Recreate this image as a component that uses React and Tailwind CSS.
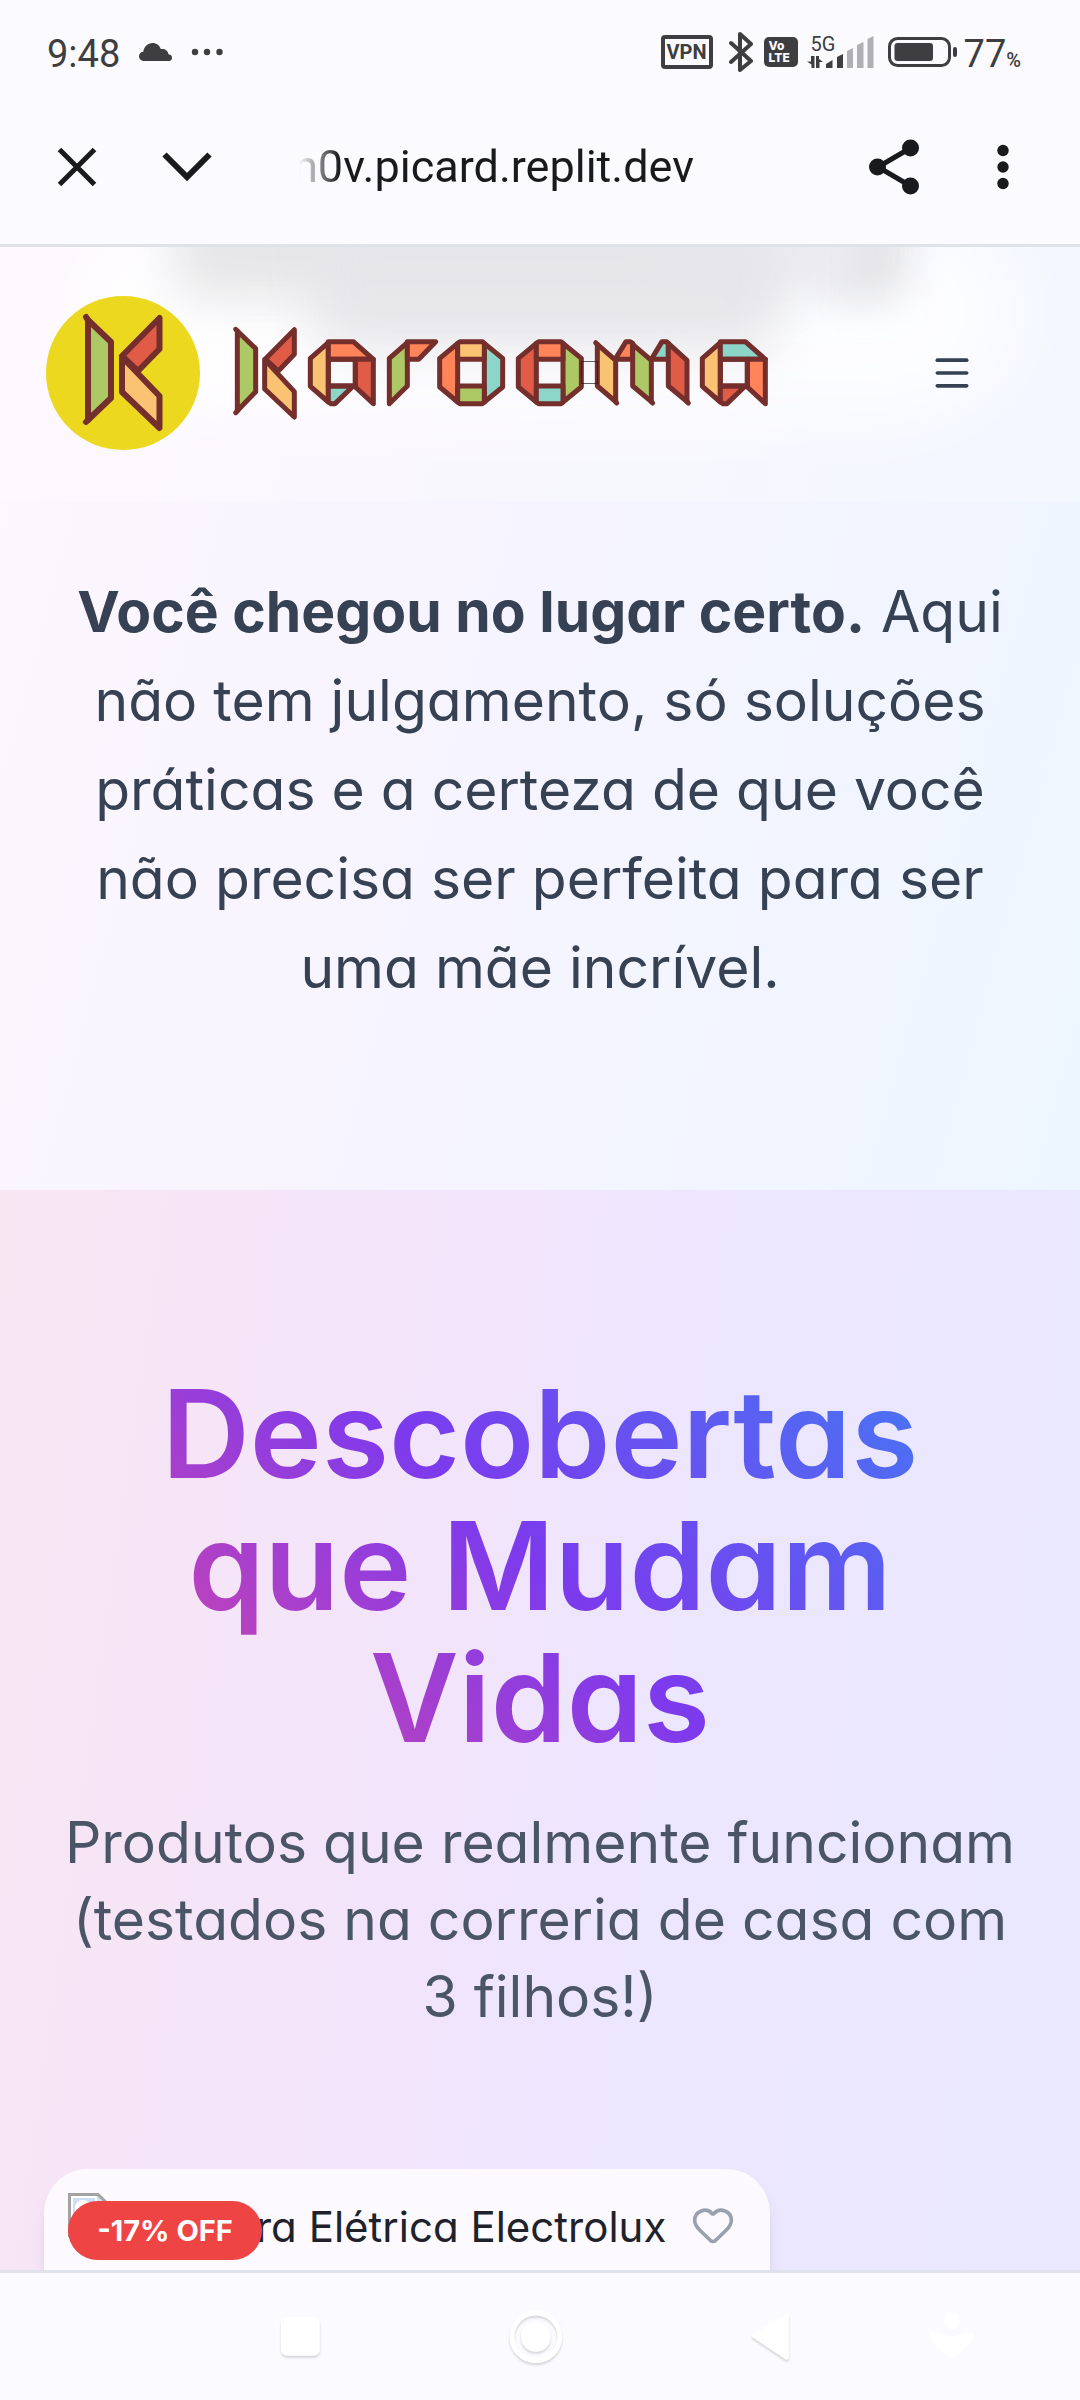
import { Heart, Menu } from "lucide-react";

const C = {
  line: "#742f2c",
  green: "#adc965",
  red: "#e05c46",
  sand: "#fac273",
  coral: "#ff8459",
  teal: "#8bd6c9",
};

function Panels({ items, dx = 0 }) {
  return (
    <g transform={`translate(${dx} 0)`}>
      {items.map(([fill, points]) => (
        <polygon key={points} fill={fill} points={points} />
      ))}
    </g>
  );
}

function LetterA({ dx, left, top, right, bottom }) {
  return (
    <Panels
      dx={dx}
      items={[
        [left, "271,142 325,95 325,273 271,226"],
        [top, "325,92 400,92 460,145 325,145"],
        [right, "406,145 460,145 460,278 406,228"],
        [bottom, "325,225 400,225 345,278 333,278 325,272"],
        ["none", "325,145 406,145 406,225 325,225"],
      ]}
    />
  );
}

function LetterO({ dx, left, top, right, bottom }) {
  return (
    <Panels
      dx={dx}
      items={[
        [left, "659,142 713,97 713,273 659,228"],
        [right, "793,97 848,142 848,228 793,273"],
        [top, "713,97 720,92 787,92 793,97 793,145 713,145"],
        [bottom, "713,225 793,225 793,273 787,278 720,278 713,273"],
      ]}
    />
  );
}

function Wordmark() {
  return (
    <svg viewBox="36 42 1614 288" className="h-24 w-[538px]" role="img" aria-label="Karooma">
      <g stroke={C.line} strokeWidth="15" strokeLinejoin="round" strokeLinecap="round">
        <Panels
          items={[
            [C.green, "52,60 107,113 107,242 52,299"],
            [C.red, "223,56 223,130 175,180 136,144"],
            [C.sand, "134,146 134,234 223,318 223,242"],
          ]}
        />
        <path d="M47 55 L54 62 M47 305 L54 298" />
        <LetterA dx={0} left={C.sand} top={C.coral} right={C.red} bottom={C.teal} />
        <Panels
          items={[
            [C.green, "508,142 562,95 562,225 508,278"],
            [C.coral, "562,92 647,92 596,145 562,145"],
          ]}
        />
        <LetterO dx={0} left={C.coral} top={C.sand} right={C.teal} bottom={C.green} />
        <LetterO dx={236} left={C.red} top={C.coral} right={C.green} bottom={C.teal} />
        <Panels
          dx={810}
          items={[
            [C.coral, "377,142 408,92 421,92 428,97 428,145 377,145"],
            [C.teal, "484,145 516,92 530,92 535,97 535,145"],
            [C.sand, "322,100 377,148 377,272 322,225"],
            [C.green, "428,100 484,148 484,272 428,225"],
            [C.red, "535,97 591,148 591,272 535,225"],
          ]}
        />
        <path d="M1127 95 L1133 101 M1187 272 L1190 276 M1294 272 L1298 276 M1401 272 L1405 276" />
        <LetterA dx={1176} left={C.sand} top={C.teal} right={C.coral} bottom={C.red} />
      </g>
      <rect x="1084" y="152" width="49" height="65" fill="none" stroke="#1d1414" strokeWidth="2" />
    </svg>
  );
}

function LogoBadge() {
  return (
    <svg viewBox="46 296 154 154" className="size-[154px]" aria-hidden="true">
      <circle cx="123" cy="373" r="77" fill="#edd820" />
      <g stroke={C.line} strokeWidth="6" strokeLinejoin="round" strokeLinecap="round">
        <polygon fill={C.green} points="88,320 111,342 111,398 88,420" />
        <path d="M86 317 L88 320 M86 422 L88 420" />
        <polygon fill={C.red} points="159.5,318 159.5,349 138,371 122,356" />
        <polygon fill={C.sand} points="122,357 122,392 159.5,428 159.5,396" />
      </g>
    </svg>
  );
}

function StatusBar() {
  return (
    <div className="flex h-[104px] items-center justify-between pl-[47px] pr-[59px] font-['Roboto',sans-serif] text-[#3e3e40]">
      <div className="flex items-center">
        <span className="pt-1 text-[38px] leading-10">9:48</span>
        <svg viewBox="0 0 33 18" className="ml-[19px] h-[18px] w-[33px]" fill="currentColor" aria-hidden="true">
          <path d="M5 18 A4.7 4.7 0 0 1 0 13.400 C0 10.500 2 8.800 4.300 8.700 C5 3.500 8.700 0 13.500 0 C17.500 0 20.500 2.300 21.800 6 C26 5.500 29 7.500 29.500 11.300 C32 11.800 33 13 33 15 C33 17 31.800 18 30 18 Z" />
        </svg>
        <svg viewBox="0 0 32 8" className="ml-[19px] h-2 w-8" fill="currentColor" aria-hidden="true">
          <circle cx="4" cy="4" r="3.200" />
          <circle cx="16" cy="4" r="3.200" />
          <circle cx="28.500" cy="4" r="3.200" />
        </svg>
      </div>
      <div className="flex items-center">
        <span className="flex h-[34px] w-[52px] items-center justify-center rounded-[4px] border-4 border-current text-[20px] font-bold leading-5">VPN</span>
        <svg viewBox="0 0 24 40" className="ml-4 h-10 w-6" fill="none" stroke="currentColor" strokeWidth="4" strokeLinecap="round" strokeLinejoin="round" aria-hidden="true">
          <path d="M2 11 L22 29 L11 38 V2 L22 12 L2 30" />
        </svg>
        <span className="ml-[11px] flex h-[30px] w-[34px] flex-col justify-center rounded-[5px] bg-[#3e3e40] pl-[5px] font-['Inter',sans-serif] text-[12px] font-extrabold leading-3 text-[#fafaff]">
          <span>Vo</span>
          <span>LTE</span>
        </span>
        <div className="ml-[9px] flex h-8 w-[68px] items-end">
          <div className="flex h-8 w-[18px] flex-col justify-between">
            <span className="ml-1 text-[20px] leading-4">5G</span>
            <svg viewBox="0 0 18 12" className="h-3 w-[18px]" fill="currentColor" aria-hidden="true">
              <path d="M4 0 H7.500 V12 H4.500 V8.500 L0 5.500 H4 Z M9 0 H12 V3 L16 6 H12.500 V12 H9 Z" />
            </svg>
          </div>
          <svg viewBox="0 0 50 32" className="h-8 w-[50px]" aria-hidden="true">
            <path fill="#3e3e40" d="M1 28 L7.500 24 V32 H1 Z M12 21 L18 18 V32 H12 Z" />
            <path fill="#b0afb4" d="M22 15 L28 12 V32 H22 Z M32 9 L38.500 6 V32 H32 Z M42.500 3 L48.500 0 V32 H42.500 Z" />
          </svg>
        </div>
        <svg viewBox="0 0 70 32" className="ml-[13px] h-8 w-[70px]" aria-hidden="true">
          <rect x="1.500" y="2.500" width="60" height="27" rx="8" fill="none" stroke="#3e3e40" strokeWidth="3" />
          <rect x="6.500" y="7" width="38.500" height="18" rx="3" fill="#3e3e40" />
          <rect x="65" y="11" width="4" height="10" rx="2" fill="#3e3e40" />
        </svg>
        <span className="ml-[6px] flex items-baseline pt-1 text-[38px] leading-10">
          77<span className="text-[20px] font-medium leading-5">%</span>
        </span>
      </div>
    </div>
  );
}

function BrowserBar() {
  return (
    <div className="flex h-[126px] items-center px-[52px] text-[#191a1e]">
      <button type="button" aria-label="Fechar" className="size-[50px]">
        <svg viewBox="0 0 50 50" fill="none" stroke="currentColor" strokeWidth="5" aria-hidden="true">
          <path d="M7.500 7.500 L42.500 42.500 M42.500 7.500 L7.500 42.500" />
        </svg>
      </button>
      <button type="button" aria-label="Minimizar" className="ml-[59px] size-[52px]">
        <svg viewBox="0 0 52 52" fill="none" stroke="currentColor" strokeWidth="6" aria-hidden="true">
          <path d="M3.500 13.500 L26 36 L48.500 13.500" />
        </svg>
      </button>
      <div className="ml-[80px] flex min-w-0 flex-1 overflow-hidden [mask-image:linear-gradient(to_right,transparent_6px,black_46px)]">
        <span className="whitespace-nowrap font-['Roboto',sans-serif] text-[45px] leading-[56px]">n0v.picard.replit.dev</span>
      </div>
      <button type="button" aria-label="Compartilhar" className="h-14 w-[52px]">
        <svg viewBox="0 0 52 56" fill="currentColor" aria-hidden="true">
          <path d="M42.500 9 L10 28 L42.500 47" fill="none" stroke="currentColor" strokeWidth="5" />
          <circle cx="42.500" cy="9" r="8.500" />
          <circle cx="9.500" cy="28" r="8.500" />
          <circle cx="42.500" cy="47" r="8.500" />
        </svg>
      </button>
      <button type="button" aria-label="Mais opções" className="ml-[58px] h-14 w-[50px]">
        <svg viewBox="0 0 50 56" fill="currentColor" aria-hidden="true">
          <circle cx="25" cy="11.500" r="5.700" />
          <circle cx="25" cy="28" r="5.700" />
          <circle cx="25" cy="44.500" r="5.700" />
        </svg>
      </button>
    </div>
  );
}

function SiteHeader() {
  return (
    <header className="relative isolate flex h-[254px] items-center justify-between overflow-hidden bg-white/25 pb-0.5 pl-[46px] pr-[106px]">
      <div className="absolute inset-x-[70px] -top-10 -z-10 h-[210px] rounded-full bg-white/80 blur-[40px]" />
      <div className="absolute -top-16 left-[16%] right-[28%] -z-10 h-[116px] rounded-3xl bg-[#e3e3e6]/90 blur-[24px]" />
      <div className="absolute -top-16 left-[76%] right-[16%] -z-10 h-[116px] rounded-3xl bg-[#e2e2e5] blur-[22px]" />
      <div className="absolute -top-10 left-[60%] right-[20%] -z-10 h-[80px] rounded-3xl bg-[#ebebef] blur-[22px]" />
      <div className="absolute -top-10 left-[29%] right-[28%] -z-10 h-[146px] rounded-3xl bg-[#e5e5e9]/90 blur-[26px]" />
      <a href="#inicio" aria-label="Karooma" className="flex items-center gap-8">
        <LogoBadge />
        <Wordmark />
      </a>
      <button type="button" aria-label="Abrir menu" className="text-gray-700">
        <Menu size={44} strokeWidth={2} />
      </button>
    </header>
  );
}

function ProductCard() {
  return (
    <article className="relative flex h-[160px] w-[726px] items-start rounded-[44px] bg-[#fcfaff] pl-6 pr-9 pt-6 shadow-lg">
      <svg viewBox="0 0 40 44" className="h-11 w-10" aria-hidden="true">
        <path d="M1.500 44 V1.500 H30 L39 10 V44" fill="#cfdef7" stroke="#a3a3a3" strokeWidth="3" />
        <path d="M4 44 V4 H28 V14 H40" fill="none" stroke="#fff" strokeWidth="2" />
        <circle cx="15" cy="15" r="8" fill="#fff" />
      </svg>
      <span className="ml-[148px] mt-[6px] whitespace-nowrap font-['Inter',sans-serif] text-[42px] leading-[56px] text-[#20222b] [font-feature-settings:'cv11']">ra Elétrica Electrolux</span>
      <button type="button" aria-label="Adicionar aos favoritos" className="absolute right-[35px] top-[34px] text-gray-400">
        <Heart size={44} strokeWidth={2} />
      </button>
      <span className="absolute left-6 top-8 flex h-[59px] w-[194px] items-center justify-center rounded-full bg-[#ef4444] font-['Inter',sans-serif] text-[29px] font-bold leading-8 text-white">-17% OFF</span>
    </article>
  );
}

function NavBar() {
  return (
    <nav aria-label="Navegação do sistema" className="flex h-[130px] shrink-0 items-center border-t-[3px] border-[#e1e3ec] bg-[#fafaff] pl-[272px] pr-[100px]">
      <button type="button" aria-label="Recentes" className="size-14">
        <svg viewBox="0 0 56 56" className="drop-shadow-[0_2px_1px_rgba(0,0,0,0.15)]" aria-hidden="true">
          <rect x="9" y="8" width="39" height="39" rx="6" fill="#fff" />
        </svg>
      </button>
      <button type="button" aria-label="Início" className="ml-[180px] size-14">
        <svg viewBox="0 0 56 56" className="drop-shadow-[0_2px_1px_rgba(0,0,0,0.15)]" aria-hidden="true">
          <circle cx="28" cy="28" r="24" fill="none" stroke="#fff" strokeWidth="5" />
          <circle cx="28" cy="28" r="15" fill="#fff" />
        </svg>
      </button>
      <button type="button" aria-label="Voltar" className="ml-[179px] size-14">
        <svg viewBox="0 0 56 56" className="drop-shadow-[0_2px_1px_rgba(0,0,0,0.15)]" aria-hidden="true">
          <path d="M11 27 L44 7 V49 Z" fill="#fff" stroke="#fff" strokeWidth="4" strokeLinejoin="round" />
        </svg>
      </button>
      <button type="button" aria-label="Ocultar barra" className="ml-[126px] size-14">
        <svg viewBox="0 0 56 56" fill="#fff" aria-hidden="true">
          <circle cx="28" cy="12" r="8" />
          <path d="M6 26 C8 20 18 27 28 27 C38 27 48 20 50 26 C51 30 40 40 34 47 C30 51 26 51 22 47 C16 40 5 30 6 26 Z" />
        </svg>
      </button>
    </nav>
  );
}

export default function App() {
  return (
    <div className="flex min-h-screen flex-col bg-[#fafaff]">
      <StatusBar />
      <BrowserBar />
      <div className="mt-[14px] border-t-[3px] border-[#e0e2ea]" />
      <main className="flex flex-1 flex-col overflow-hidden">
        <div className="bg-[linear-gradient(105deg,#fdf7fe_0%,#f6f4fe_45%,#f1f5ff_75%,#edf6ff_100%)]">
          <SiteHeader />
          <section className="px-10 pb-[178px] pt-[66px] text-center font-['Inter',sans-serif] text-[57px] leading-[89px] text-gray-700 [font-feature-settings:'cv11']">
            <p>
              <strong className="font-bold">Você chegou no lugar certo.</strong> Aqui
              <br />
              não tem julgamento, só soluções
              <br />
              práticas e a certeza de que você
              <br />
              não precisa ser perfeita para ser
              <br />
              uma mãe incrível.
            </p>
          </section>
        </div>
        <section className="flex-1 bg-[linear-gradient(98deg,#f9e6f3_0%,#f2e4fb_40%,#ece6fe_60%,#e9e8fe_100%)] px-11 pt-[178px]">
          <h2 className="bg-[linear-gradient(45deg,#ec4899,#7c3aed,#3b82f6)] bg-clip-text pb-2 text-center font-['Inter',sans-serif] text-[122px] font-semibold leading-[132px] text-transparent [font-feature-settings:'cv11']">
            Descobertas
            <br />
            que Mudam
            <br />
            Vidas
          </h2>
          <p className="mb-[134px] mt-8 text-center font-['Inter',sans-serif] text-[57px] leading-[77px] text-gray-600 [font-feature-settings:'cv11']">
            Produtos que realmente funcionam
            <br />
            (testados na correria de casa com
            <br />3 filhos!)
          </p>
          <div className="h-[101px] overflow-visible">
            <ProductCard />
          </div>
        </section>
      </main>
      <NavBar />
    </div>
  );
}
